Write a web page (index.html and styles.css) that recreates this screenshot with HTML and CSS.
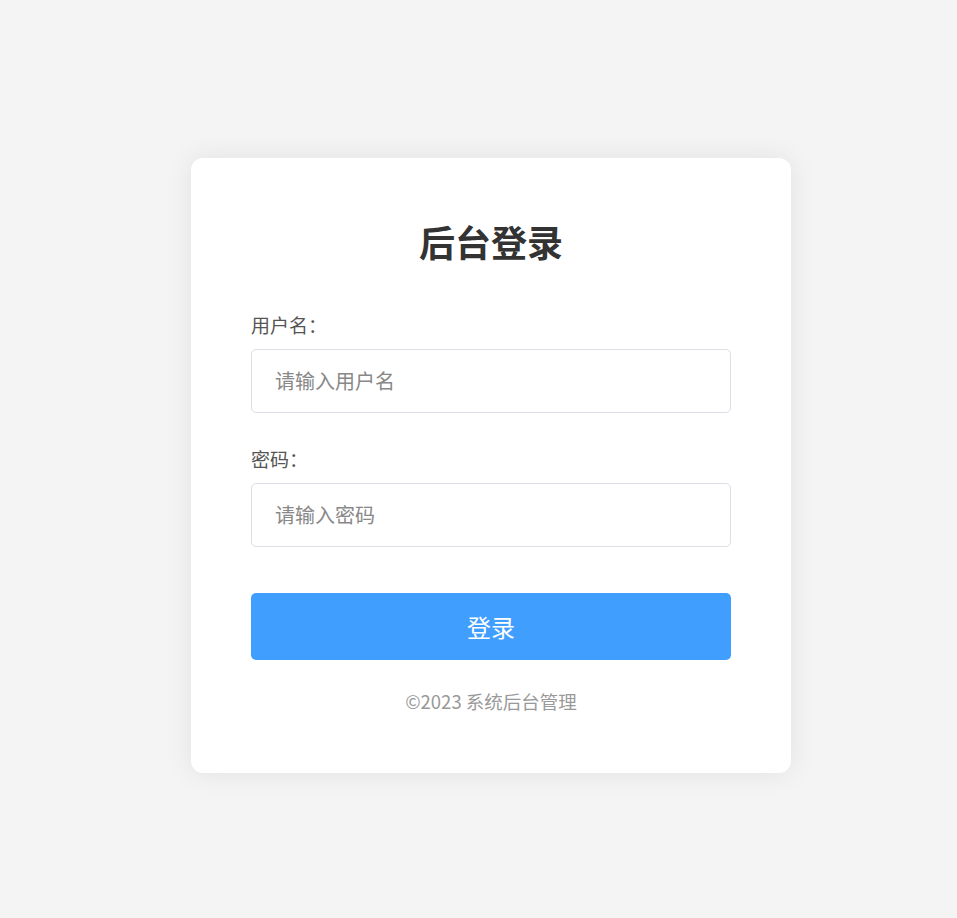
FILE: index.html
```html
<!DOCTYPE html>
<html lang="zh-CN">
<head>
  <meta charset="UTF-8" />
  <meta name="viewport" content="width=device-width, initial-scale=1.0"/>
  <title>后台登录</title>
  <link rel="stylesheet" href="styles.css">
</head>
<body>

  <div class="login-box">
    <h1>后台登录</h1>
    <form class="login-form">
      <div class="form-item">
        <label for="username">用户名：</label>
        <input type="text" id="username" placeholder="请输入用户名">
      </div>
      <div class="form-item">
        <label for="password">密码：</label>
        <input type="password" id="password" placeholder="请输入密码">
      </div>
      <button type="button" class="login-btn">登录</button>
    </form>
    <p class="footer">©2023 系统后台管理</p>
  </div>

</body>
</html>
```

FILE: styles.css
```css
* { margin: 0; padding: 0; box-sizing: border-box; }

body {
  font-family: "Noto Sans CJK SC", "Noto Sans", sans-serif;
  background: #f4f4f4;
  min-height: 100vh;
  padding: 12px 0 0 25px;
  display: flex;
  align-items: center;
  justify-content: center;
}

.login-box {
  width: 600px;
  padding: 57px 60px 59px;
  background: #fff;
  border-radius: 12px;
  box-shadow: 0 0 28px rgba(0,0,0,0.08);
}

h1 {
  text-align: center;
  font-size: 36px;
  font-weight: bold;
  color: #333;
  margin-bottom: 44px;
}

.form-item { margin-bottom: 32px; }

.form-item label {
  display: block;
  font-size: 19px;
  color: #555;
  margin-bottom: 11px;
}

.form-item input {
  width: 100%;
  height: 64px;
  padding: 0 23px;
  border: 1px solid #dcdfe6;
  border-radius: 5px;
  font-family: inherit;
  font-size: 20px;
  color: #333;
  outline: none;
}

.form-item input::placeholder { color: #888; }

.login-btn {
  display: block;
  width: 100%;
  height: 67px;
  margin-top: 46px;
  background: #409eff;
  color: #fff;
  border: none;
  border-radius: 5px;
  font-family: inherit;
  font-size: 24px;
  cursor: pointer;
}

.login-btn:hover { background: #66b1ff; }

.footer {
  margin-top: 28px;
  text-align: center;
  font-size: 18.5px;
  color: #999;
}
```
